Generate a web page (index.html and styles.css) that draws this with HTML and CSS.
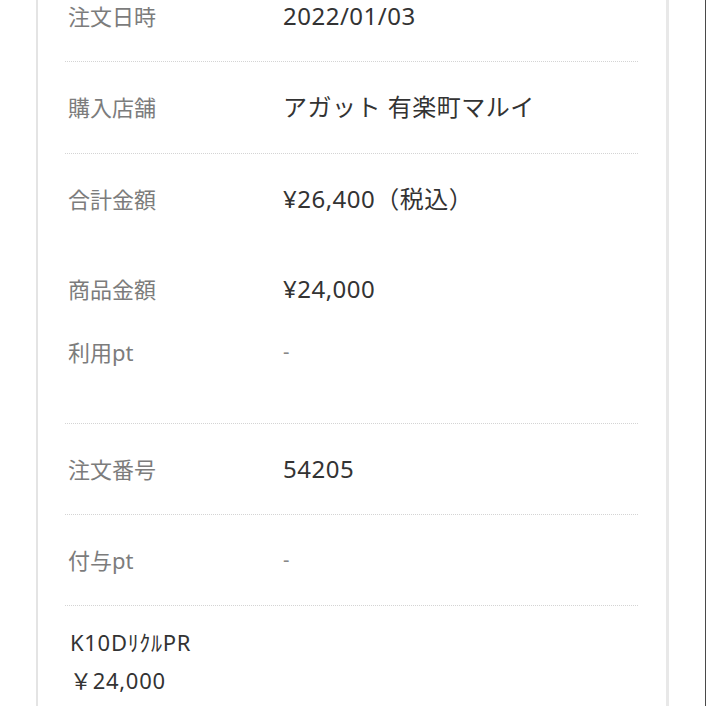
FILE: index.html
```html
<!DOCTYPE html>
<html lang="ja">
<head>
<meta charset="utf-8">
<link rel="stylesheet" href="styles.css">
</head>
<body>
<div class="page">
  <div class="card">
    <div class="row row-first">
      <div class="label">注文日時</div>
      <div class="value">2022/01/03</div>
    </div>
    <div class="row">
      <div class="label">購入店舗</div>
      <div class="value">アガット 有楽町マルイ</div>
    </div>
    <div class="row row-group">
      <div class="label">合計金額</div>
      <div class="value">¥26,400（税込）</div>
      <div class="label sub-1">商品金額</div>
      <div class="value sub-1">¥24,000</div>
      <div class="label sub-2">利用pt</div>
      <div class="value sub-2 dash">-</div>
    </div>
    <div class="row row-tight">
      <div class="label">注文番号</div>
      <div class="value">54205</div>
    </div>
    <div class="row row-tight">
      <div class="label">付与pt</div>
      <div class="value dash">-</div>
    </div>
    <div class="item">
      <div class="item-name">K10DﾘｸﾙPR</div>
      <div class="item-price">￥24,000</div>
    </div>
  </div>
</div>
</body>
</html>
```

FILE: styles.css
```css
html, body {
  margin: 0;
  padding: 0;
  background: #ffffff;
}

body {
  font-family: "Noto Sans", "Noto Sans CJK JP", sans-serif;
}

.page {
  width: 706px;
  height: 706px;
  box-sizing: border-box;
  border-right: 1px solid #4a4a4a;
  overflow: hidden;
  padding-left: 36px;
}

.card {
  width: 633px;
  box-sizing: border-box;
  border-left: 2px solid #e4e4e4;
  border-right: 3px solid #e8e8e8;
  padding: 0 28px 0 27px;
  min-height: 706px;
}

.row {
  display: grid;
  grid-template-columns: 218px 1fr;
  align-items: center;
  padding: 29px 0 30px;
  border-bottom: 1px dotted #d4d4d4;
  line-height: 32px;
}

.row-first {
  padding-top: 0;
  padding-bottom: 29px;
}

.row-group {
  padding-bottom: 55px;
}

.row-tight {
  padding-bottom: 29px;
}

.label {
  font-size: 22px;
  color: #7c7c7c;
  padding-left: 3px;
}

.value {
  font-size: 24px;
  color: #333333;
  letter-spacing: 0.5px;
}

.sub-1 {
  margin-top: 58px;
}

.sub-2 {
  margin-top: 31px;
}

.dash {
  color: #888888;
  font-size: 20px;
}

.item {
  padding: 20px 0 0 5px;
  color: #333333;
  font-size: 22px;
  line-height: 32px;
  letter-spacing: 0.7px;
}

.item-price {
  margin-top: 6px;
}
```
